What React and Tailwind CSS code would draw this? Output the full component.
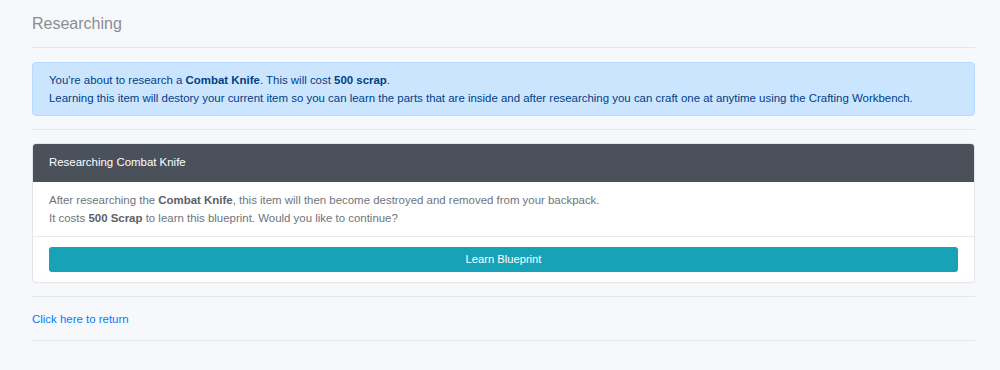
const App = () => {
  return (
    <div className="min-h-[370px] bg-[#f7f8fc] pl-8 pr-[25px] pt-3 font-['Liberation_Sans',Arial,sans-serif]">
      <h1 className="text-[16px] leading-6 text-[#8a8d92]">Researching</h1>
      <hr className="mt-[11px] border-t border-[#e4e6ea]" />

      <div className="mt-[14px] rounded border border-[#b8daff] bg-[#cce5ff] px-4 py-2 text-[11.45px] leading-[18px] text-[#004085]">
        <p>
          You're about to research a <b>Combat Knife</b>. This will cost <b>500 scrap</b>.
        </p>
        <p>
          Learning this item will destory your current item so you can learn the parts that are inside and after researching you can craft one at anytime using the Crafting Workbench.
        </p>
      </div>

      <hr className="mt-[13px] border-t border-[#e4e6ea]" />

      <div className="mt-[13px] overflow-hidden rounded border border-[#e2e4e8] bg-white">
        <div className="flex h-[38px] items-center bg-[#4a515b] px-4 text-[11.45px] text-white">
          Researching Combat Knife
        </div>
        <div className="px-4 py-[9px] text-[11.45px] leading-[18px] text-[#6c757d]">
          <p>
            After researching the <b className="text-[#5b6168]">Combat Knife</b>, this item will then become destroyed and removed from your backpack.
          </p>
          <p>
            It costs <b className="text-[#5b6168]">500 Scrap</b> to learn this blueprint. Would you like to continue?
          </p>
        </div>
        <div className="border-t border-[#e8e9ec] px-4 py-[10px]">
          <button className="flex h-[25px] w-full items-center justify-center rounded-[3px] bg-[#17a2b8] text-[11.2px] text-white">
            Learn Blueprint
          </button>
        </div>
      </div>

      <hr className="mt-[13px] border-t border-[#e4e6ea]" />
      <a href="#" className="mt-[14px] block text-[11.45px] leading-4 text-[#007bff]">
        Click here to return
      </a>
      <hr className="mt-[13px] border-t border-[#e4e6ea]" />
    </div>
  )
}

export default App
